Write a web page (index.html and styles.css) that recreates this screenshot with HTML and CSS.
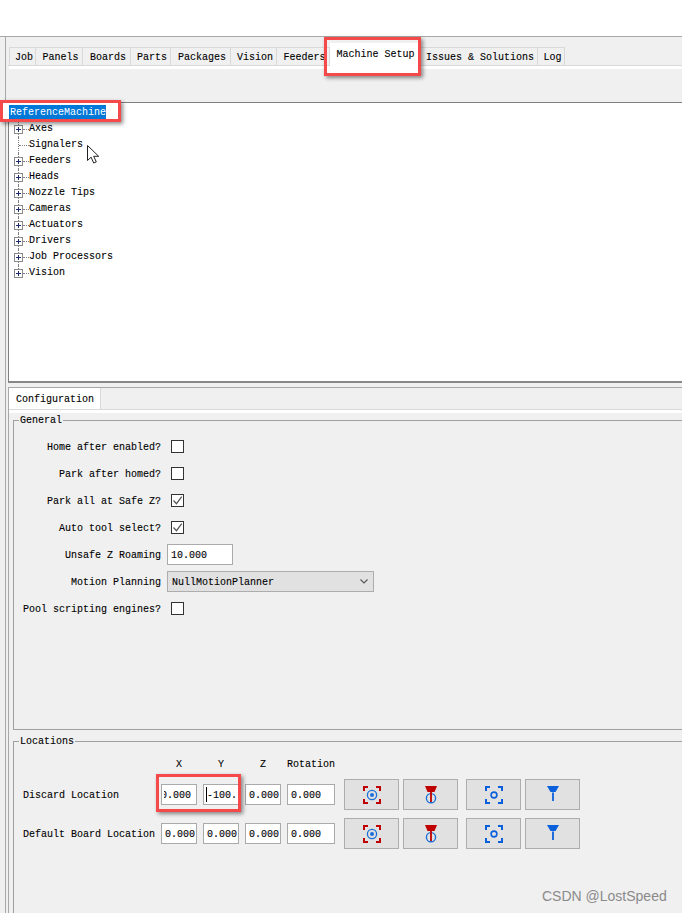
FILE: index.html
```html
<!DOCTYPE html>
<html lang="en">
<head>
<meta charset="utf-8">
<title>Machine Setup</title>
<link rel="stylesheet" href="styles.css">
</head>
<body>
<svg class="sprites" aria-hidden="true">
  <symbol id="i-plus" viewBox="0 0 9 9">
    <rect x=".5" y=".5" width="8" height="8" fill="#fff" stroke="#8a8a8a"/>
    <path d="M2 4.5h5M4.5 2v5" stroke="#1c2c70" fill="none"/>
  </symbol>
  <symbol id="i-check" viewBox="0 0 11 11">
    <path d="M1.5 5.5l3 3.2 5.2-7" fill="none" stroke="#555" stroke-width="1.2"/>
  </symbol>
  <symbol id="i-chev" viewBox="0 0 8 5">
    <path d="M.5.5L4 4 7.5.5" fill="none" stroke="#555" stroke-width="1.1"/>
  </symbol>
  <symbol id="i-cam-tool" viewBox="0 0 18 18">
    <path d="M1 5V1h4M13 1h4v4M17 13v4h-4M5 17H1v-4" fill="none" stroke="#c00000" stroke-width="2"/>
    <circle cx="9" cy="9" r="4.6" fill="none" stroke="#1a6fd8" stroke-width="1.3"/>
    <circle cx="9" cy="9" r="2" fill="#1a6fd8"/>
  </symbol>
  <symbol id="i-nozzle-tool" viewBox="0 0 18 18">
    <circle cx="9" cy="12.2" r="4.6" fill="none" stroke="#1a6fd8" stroke-width="1.4"/>
    <path d="M3 0h12l-2.5 6h-7z" fill="#c00000"/>
    <path d="M9 5v11" stroke="#c00000" stroke-width="1.8"/>
  </symbol>
  <symbol id="i-cam" viewBox="0 0 18 18">
    <path d="M1 5V1h4M13 1h4v4M17 13v4h-4M5 17H1v-4" fill="none" stroke="#0a5fdc" stroke-width="2"/>
    <circle cx="9" cy="9" r="2.9" fill="none" stroke="#0a5fdc" stroke-width="1.6"/>
  </symbol>
  <symbol id="i-nozzle" viewBox="0 0 18 18">
    <path d="M3 0h12l-3.5 6h-5z" fill="#0a5fdc"/>
    <path d="M9 6.5V15" stroke="#0a5fdc" stroke-width="1.8"/>
  </symbol>
</svg>

<div class="app">
  <div class="topbar"></div>
  <div class="frame">
    <nav class="tabs">
      <span class="tab">Job</span>
      <span class="tab">Panels</span>
      <span class="tab">Boards</span>
      <span class="tab">Parts</span>
      <span class="tab">Packages</span>
      <span class="tab">Vision</span>
      <span class="tab">Feeders</span>
      <span class="tab tab-active">Machine Setup</span>
      <span class="tab">Issues &amp; Solutions</span>
      <span class="tab">Log</span>
    </nav>
    <div class="toolbar"></div>

    <section class="tree">
      <div class="tree-root"><span class="tree-selected">ReferenceMachine</span></div>
      <ul class="tree-list">
        <li class="node"><svg class="expander"><use href="#i-plus"/></svg><span class="twig"></span>Axes</li>
        <li class="node"><span class="twig twig-leaf"></span>Signalers</li>
        <li class="node"><svg class="expander"><use href="#i-plus"/></svg><span class="twig"></span>Feeders</li>
        <li class="node"><svg class="expander"><use href="#i-plus"/></svg><span class="twig"></span>Heads</li>
        <li class="node"><svg class="expander"><use href="#i-plus"/></svg><span class="twig"></span>Nozzle Tips</li>
        <li class="node"><svg class="expander"><use href="#i-plus"/></svg><span class="twig"></span>Cameras</li>
        <li class="node"><svg class="expander"><use href="#i-plus"/></svg><span class="twig"></span>Actuators</li>
        <li class="node"><svg class="expander"><use href="#i-plus"/></svg><span class="twig"></span>Drivers</li>
        <li class="node"><svg class="expander"><use href="#i-plus"/></svg><span class="twig"></span>Job Processors</li>
        <li class="node"><svg class="expander"><use href="#i-plus"/></svg><span class="twig"></span>Vision</li>
      </ul>
    </section>

    <section class="details">
      <div class="details-tabs"><span class="details-tab">Configuration</span></div>
      <div class="details-body">
        <fieldset class="group group-general">
          <legend class="group-title">General</legend>
          <div class="form">
            <label class="form-label">Home after enabled?</label>
            <span class="checkbox"></span>
            <label class="form-label">Park after homed?</label>
            <span class="checkbox"></span>
            <label class="form-label">Park all at Safe Z?</label>
            <span class="checkbox"><svg class="check"><use href="#i-check"/></svg></span>
            <label class="form-label">Auto tool select?</label>
            <span class="checkbox"><svg class="check"><use href="#i-check"/></svg></span>
            <label class="form-label">Unsafe Z Roaming</label>
            <span class="field field-roaming"><span class="field-text">10.000</span></span>
            <label class="form-label">Motion Planning</label>
            <span class="select"><span class="select-text">NullMotionPlanner</span><svg class="chev"><use href="#i-chev"/></svg></span>
            <label class="form-label">Pool scripting engines?</label>
            <span class="checkbox"></span>
          </div>
        </fieldset>

        <fieldset class="group group-locations">
          <legend class="group-title">Locations</legend>
          <div class="locations">
            <span></span>
            <span class="col-head">X</span>
            <span class="col-head">Y</span>
            <span class="col-head">Z</span>
            <span class="col-head">Rotation</span>
            <span></span>

            <span class="loc-label">Discard Location</span>
            <span class="field"><span class="field-text field-scrolled">0.000</span></span>
            <span class="field"><span class="field-text field-caret">-100.</span></span>
            <span class="field"><span class="field-text">0.000</span></span>
            <span class="field"><span class="field-text">0.000</span></span>
            <div class="actions">
              <button class="action"><svg class="action-icon"><use href="#i-cam-tool"/></svg></button>
              <button class="action"><svg class="action-icon"><use href="#i-nozzle-tool"/></svg></button>
              <button class="action action-split"><svg class="action-icon"><use href="#i-cam"/></svg></button>
              <button class="action"><svg class="action-icon"><use href="#i-nozzle"/></svg></button>
            </div>

            <span class="loc-label">Default Board Location</span>
            <span class="field"><span class="field-text">0.000</span></span>
            <span class="field"><span class="field-text">0.000</span></span>
            <span class="field"><span class="field-text">0.000</span></span>
            <span class="field"><span class="field-text">0.000</span></span>
            <div class="actions">
              <button class="action"><svg class="action-icon"><use href="#i-cam-tool"/></svg></button>
              <button class="action"><svg class="action-icon"><use href="#i-nozzle-tool"/></svg></button>
              <button class="action action-split"><svg class="action-icon"><use href="#i-cam"/></svg></button>
              <button class="action"><svg class="action-icon"><use href="#i-nozzle"/></svg></button>
            </div>
          </div>
        </fieldset>
      </div>
    </section>
  </div>

  <div class="callout callout-tab"></div>
  <div class="callout callout-root"></div>
  <div class="callout callout-fields"></div>

  <svg class="cursor" viewBox="0 0 13 19">
    <path d="M.5.5v15l3.6-3.3 2.6 5.8 2.6-1.1-2.6-5.6h5z" fill="#fff" stroke="#222"/>
  </svg>
  <span class="watermark">CSDN @LostSpeed</span>
</div>
</body>
</html>
```

FILE: styles.css
```css
* { box-sizing: border-box; }

html, body {
  margin: 0;
  padding: 0;
}

body {
  font-family: "Liberation Mono", monospace;
  font-size: 10px;
  line-height: 14px;
  color: #000;
  background: #f0f0f0;
  overflow: hidden;
  -webkit-text-stroke: .1px #000;
}

.sprites {
  position: absolute;
  width: 0;
  height: 0;
}

.app {
  position: relative;
  display: flex;
  flex-direction: column;
  width: 682px;
  height: 913px;
  overflow: hidden;
  background: #f0f0f0;
}

.topbar {
  flex: none;
  height: 37px;
  background: #fff;
  border-bottom: 1px solid #a8a8a8;
}

.frame {
  flex: 1;
  display: flex;
  flex-direction: column;
  min-height: 0;
  margin-left: 5px;
  padding: 10px 0 0 2px;
  border-left: 1px solid #a8a8a8;
}

/* Labels sit one pixel below the centre of their row */
.tab,
.details-tab,
.form-label,
.col-head,
.loc-label,
.select-text,
.field-text,
.group-title {
  padding-top: 2px;
  line-height: 12px;
}

/* main tabs */
.tabs {
  flex: none;
  display: grid;
  grid-template-columns: 27px 47px 48px 40px 60px 46px 53px 90px 118px 27px;
  height: 19px;
  padding-left: 1px;
  border-bottom: 1px solid #d9d9d9;
}

.tab {
  display: flex;
  align-items: center;
  justify-content: center;
  padding-left: 3px;
  white-space: nowrap;
  border-top: 1px solid #d9d9d9;
  border-right: 1px solid #d9d9d9;
}

.tab:first-child {
  border-left: 1px solid #d9d9d9;
}

.tab-active {
  position: relative;
  height: 23px;
  margin-top: -4px;
  padding-top: 0;
  padding-left: 2px;
  background: #fff;
  border-color: transparent;
}

.toolbar {
  flex: none;
  height: 37px;
  margin-left: 1px;
  background: #f0f0f0;
  border-top: 3px solid #fff;
  border-bottom: 1px solid #808080;
}

/* tree */
.tree {
  flex: none;
  height: 280px;
  padding-top: 2px;
  background: #fff;
  border-left: 1px solid #808080;
  border-bottom: 2px solid #888;
}

.tree-root {
  height: 16px;
}

.tree-selected {
  display: inline-block;
  height: 15px;
  line-height: 15px;
  padding-left: 1px;
  color: #fff;
  -webkit-text-stroke: 0;
  background: #0078d7;
}

.tree-list {
  list-style: none;
  margin: 0;
  padding: 0;
}

.node {
  position: relative;
  display: flex;
  align-items: center;
  height: 16px;
}

.node::before {
  content: "";
  position: absolute;
  left: 9px;
  top: 0;
  height: 100%;
  border-left: 1px dotted #808080;
}

.node:last-child::before {
  height: 50%;
}

.expander {
  position: relative;
  flex: none;
  width: 9px;
  height: 9px;
  margin-left: 5px;
}

.twig {
  flex: none;
  width: 6px;
  border-top: 1px dotted #808080;
}

.twig-leaf {
  width: 10px;
  margin-left: 10px;
}

/* lower panel */
.details {
  flex: 1;
  display: flex;
  flex-direction: column;
  min-height: 0;
  margin-top: 4px;
  border-top: 1px solid #a8a8a8;
  border-left: 1px solid #a8a8a8;
}

.details-tabs {
  flex: none;
  height: 22px;
  border-bottom: 1px solid #d9d9d9;
}

.details-tab {
  display: flex;
  align-items: center;
  width: 92px;
  height: 21px;
  padding-left: 7px;
  background: #fff;
  border-right: 1px solid #d9d9d9;
}

.details-body {
  flex: 1;
  min-height: 0;
  padding-left: 4px;
  border-top: 3px solid #fff;
}

.group {
  display: block;
  min-width: 0;
  margin: 0 -4px 0 0;
  padding: 0;
  border: 1px solid #a0a0a0;
}

.group-title {
  margin-left: 5px;
  padding-left: 1px;
  padding-right: 1px;
}

.group-general {
  height: 317px;
}

.group-locations {
  height: 300px;
  margin-top: 4px;
}

.form {
  display: grid;
  grid-template-columns: 138px auto;
  grid-auto-rows: 27px;
  column-gap: 6px;
  align-items: center;
  justify-items: start;
  padding: 6px 0 0 9px;
}

.form-label {
  justify-self: end;
  white-space: nowrap;
}

.checkbox {
  display: flex;
  align-items: center;
  justify-content: center;
  width: 13px;
  height: 13px;
  margin-left: 4px;
  background: #fff;
  border: 1px solid #333;
}

.check {
  width: 11px;
  height: 11px;
}

.field {
  display: flex;
  align-items: center;
  height: 21px;
  padding: 0 1px 0 2px;
  background: #fff;
  border: 1px solid #aaa;
  overflow: hidden;
}

.field-roaming {
  width: 66px;
}

.field-text {
  display: block;
  flex: 1;
  min-width: 0;
  overflow: hidden;
  white-space: nowrap;
  text-indent: 1px;
}

.field-scrolled {
  text-indent: -3px;
}

.field-caret {
  text-indent: 0;
  border-left: 1px solid #000;
  padding-top: 2px;
  line-height: 13px;
}

.select {
  display: flex;
  align-items: center;
  justify-content: space-between;
  width: 207px;
  height: 21px;
  padding: 0 5px 0 4px;
  background: #e1e1e1;
  border: 1px solid #adadad;
}

.chev {
  width: 8px;
  height: 5px;
}

.locations {
  display: grid;
  grid-template-columns: 132px 36px 36px 36px 48px auto;
  grid-template-rows: 14px 31px 31px;
  column-gap: 6px;
  row-gap: 8px;
  align-items: center;
  padding: 9px 0 0 9px;
  white-space: nowrap;
}

.col-head {
  text-align: center;
}

.actions {
  display: flex;
  gap: 4px;
  margin-left: 3px;
}

.action {
  display: flex;
  align-items: center;
  justify-content: center;
  width: 55px;
  height: 31px;
  padding: 0;
  background: #e1e1e1;
  border: 1px solid #adadad;
}

.action-split {
  margin-left: 4px;
}

.action-icon {
  width: 18px;
  height: 18px;
}

/* annotations over the screenshot */
.callout {
  position: absolute;
  border: 3px solid #f64a4a;
  box-shadow: 2px 2px 4px rgba(0, 0, 0, .45);
}

.callout-tab {
  left: 324px;
  top: 37px;
  width: 97px;
  height: 39px;
  box-shadow: 2px 2px 4px rgba(0, 0, 0, .45), inset 0 -7px 0 #fff;
}

.callout-root {
  left: 0;
  top: 100px;
  width: 121px;
  height: 22px;
  box-shadow: 2px 2px 4px rgba(0, 0, 0, .45), inset 6px 0 0 #fff;
}

.callout-fields {
  left: 156px;
  top: 774px;
  width: 85px;
  height: 38px;
}

.cursor {
  position: absolute;
  left: 87px;
  top: 145px;
  width: 13px;
  height: 19px;
}

.watermark {
  position: absolute;
  left: 542px;
  top: 888px;
  font-family: "Liberation Sans", Arial, sans-serif;
  font-size: 14px;
  line-height: 16px;
  color: #8a8a8a;
  -webkit-text-stroke: 0;
  white-space: nowrap;
}
```
